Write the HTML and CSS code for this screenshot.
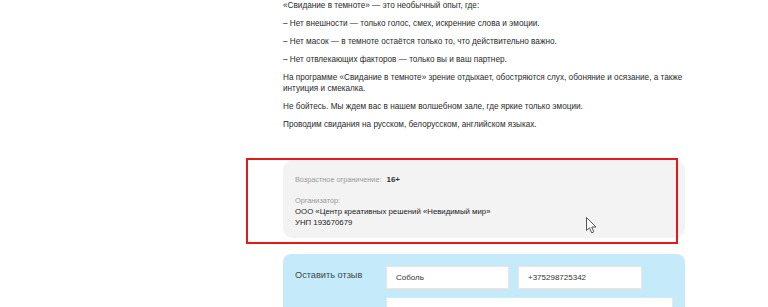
FILE: index.html
```html
<!DOCTYPE html>
<html lang="ru">
<head>
  <meta charset="UTF-8">
  <meta name="viewport" content="width=device-width, initial-scale=1.0">
  <title>Свидание в темноте</title>
  <link rel="stylesheet" href="styles.css">
</head>
<body>

  <main class="content">
    <section class="description">
      <p>«Свидание в темноте» — это необычный опыт, где:</p>
      <p>– Нет внешности — только голос, смех, искренние слова и эмоции.</p>
      <p>– Нет масок — в темноте остаётся только то, что действительно важно.</p>
      <p>– Нет отвлекающих факторов — только вы и ваш партнер.</p>
      <p>На программе «Свидание в темноте» зрение отдыхает, обостряются слух, обоняние и осязание, а также интуиция и смекалка.</p>
      <p>Не бойтесь. Мы ждем вас в нашем волшебном зале, где яркие только эмоции.</p>
      <p>Проводим свидания на русском, белорусском, английском языках.</p>
    </section>

    <section class="info-card">
      <div class="info-row">
        <span class="info-label">Возрастное ограничение:</span>
        <span class="info-age">16+</span>
      </div>
      <div class="info-org">
        <span class="info-label">Организатор:</span>
        <span class="info-value">ООО «Центр креативных решений «Невидимый мир»</span>
        <span class="info-value">УНП 193670679</span>
      </div>
    </section>

    <section class="review">
      <h3 class="review-title">Оставить отзыв</h3>
      <form class="review-form">
        <input type="text" class="field" value="Соболь">
        <input type="tel" class="field" value="+375298725342">
        <textarea class="field field-wide"></textarea>
      </form>
    </section>
  </main>

  <!-- annotation frame and mouse pointer from the screenshot -->
  <div class="highlight"></div>
  <svg class="pointer" width="12" height="17" viewBox="0 0 12 17">
    <path d="M0.5 0.5 L0.5 13.5 L3.5 10.8 L5.7 15.8 L7.8 14.9 L5.7 10 L10 10 Z" fill="#fff" stroke="#555" stroke-width="1"/>
  </svg>

</body>
</html>
```

FILE: styles.css
```css
body {
  font-family: "Liberation Sans", Arial, sans-serif;
  margin: 0;
  padding: 0;
  background-color: #fff;
  color: #333;
  overflow: hidden;
}

.content {
  width: 402px;
  margin: 0 0 0 283px;
}

.description p {
  font-size: 8.2px;
  line-height: 11px;
  margin: 0 0 7px;
  color: #2b2b2b;
}

.info-card {
  margin-top: 30px;
  background-color: #f3f3f3;
  border-radius: 10px;
  padding: 15px 12px 12px;
  height: 51px;
}

.info-row {
  display: flex;
  align-items: baseline;
  gap: 5px;
}

.info-label {
  font-size: 7.3px;
  color: #9a9a9a;
}

.info-age {
  font-size: 8px;
  font-weight: bold;
  color: #333;
}

.info-org {
  display: flex;
  flex-direction: column;
  margin-top: 11px;
  line-height: 11px;
}

.info-value {
  font-size: 7.8px;
  color: #222;
}

.review {
  margin-top: 16px;
  background-color: #c5ebfb;
  border-radius: 8px 8px 0 0;
  padding: 12px 12px 0;
  height: 60px;
  display: flex;
}

.review-title {
  font-size: 9.2px;
  font-weight: normal;
  color: #444;
  margin: 4px 0 0;
  width: 91px;
}

.review-form {
  display: grid;
  grid-template-columns: 123px 124px;
  column-gap: 9px;
  row-gap: 8px;
  align-content: start;
}

.field {
  box-sizing: border-box;
  height: 23px;
  border: 1px solid #e6e6e6;
  background: #fff;
  padding: 0 0 0 9px;
  font-family: "Liberation Sans", Arial, sans-serif;
  font-size: 8px;
  color: #333;
  outline: none;
}

.field-wide {
  grid-column: 1 / 3;
  width: 287px;
  height: 40px;
  resize: none;
}

.highlight {
  position: absolute;
  left: 246px;
  top: 158px;
  width: 428px;
  height: 82px;
  border: 2px solid #e3191c;
}

.pointer {
  position: absolute;
  left: 586px;
  top: 217px;
}
```
